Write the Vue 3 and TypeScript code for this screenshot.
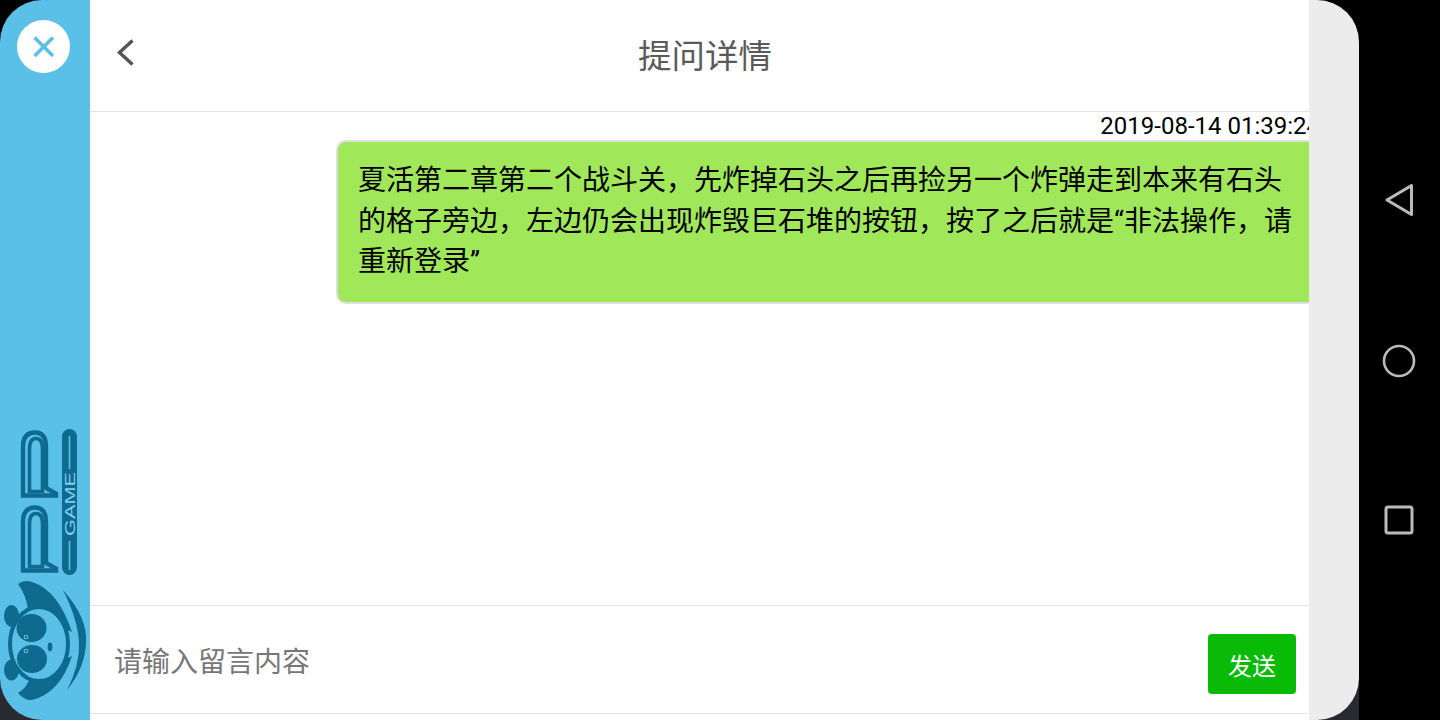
<script setup lang="ts">
import { ref } from 'vue'

const message = ref('')
const sentAt = '2019-08-14 01:39:24'
const question = '夏活第二章第二个战斗关，先炸掉石头之后再捡另一个炸弹走到本来有石头的格子旁边，左边仍会出现炸毁巨石堆的按钮，按了之后就是“非法操作，请重新登录”'
</script>

<template>
  <div class="device">
    <div class="screen">
      <aside class="side">
        <button class="close" aria-label="关闭">
          <svg width="53" height="53" viewBox="0 0 53 53">
            <path d="M17.5 17.5 L36 36 M36 17.5 L17.5 36" fill="none" stroke="#5bc0e8" stroke-width="3.6" />
          </svg>
        </button>
        <svg class="logo" width="90" height="300" viewBox="0 420 90 300">
          <g v-for="offset in [0, 75]" :key="offset" :transform="`translate(0 ${offset})`" fill="none" stroke="#0e6a8f">
            <path stroke-width="4.4" d="M23 497 V447 Q23 432.5 35 432.5 Q46 432.5 46 447 V488 L56 493.5 V495.5 H21" />
            <path stroke-width="3.6" d="M29.5 491.5 V449 Q29.5 438.5 36 438.5 Q42.5 438.5 42.5 449 V491.5 Z" />
          </g>
          <rect x="62" y="429" width="15" height="146" rx="7.5" fill="#0e6a8f" />
          <path d="M69.5 436 V469 M69.5 541 V570" stroke="#5bc0e8" stroke-width="1.6" />
          <text x="0" y="0" transform="translate(75 536) rotate(-90)" class="game" textLength="64" lengthAdjust="spacingAndGlyphs">GAME</text>

          <path d="M63 590 Q88 618 86 643 Q85 668 67 690 Q80 665 79 643 Q78 620 63 590 Z" fill="#0e6a8f" />
          <path d="M18 584 Q24 579 32 582 Q58 590 72 632 L40 618 L28 609 Q26 595 18 584 Z" fill="#0e6a8f" />
          <path d="M18 693 Q25 701 32 700 Q60 693 72 656 L40 670 L28 682 Q26 688 18 693 Z" fill="#0e6a8f" />
          <ellipse cx="11.5" cy="616" rx="7.5" ry="11" fill="#0e6a8f" />
          <ellipse cx="11.5" cy="670" rx="7.5" ry="10.5" fill="#0e6a8f" />
          <ellipse cx="39" cy="644" rx="29" ry="37" fill="#5bc0e8" stroke="#0e6a8f" stroke-width="4" />
          <ellipse cx="31.5" cy="628" rx="15" ry="14" fill="#0e6a8f" />
          <ellipse cx="32" cy="659" rx="15" ry="14" fill="#0e6a8f" />
          <circle cx="26" cy="637" r="1.8" fill="#0e6a8f" stroke="#6fb9d6" stroke-width="1.1" />
          <circle cx="26" cy="651" r="1.8" fill="#0e6a8f" stroke="#6fb9d6" stroke-width="1.1" />
          <ellipse cx="50" cy="647" rx="2.4" ry="4.4" fill="#0e6a8f" />
        </svg>
      </aside>

      <main class="main">
        <header class="header">
          <button class="back" aria-label="返回">
            <svg width="20" height="28" viewBox="0 0 20 28">
              <path d="M15.5 1.5 L2.5 13.5 L15.5 25.5" fill="none" stroke="#555" stroke-width="3.4" />
            </svg>
          </button>
          <h1 class="title">提问详情</h1>
        </header>

        <section class="thread">
          <div class="msg">
            <div class="time">{{ sentAt }}</div>
            <div class="bubble">{{ question }}</div>
          </div>
        </section>

        <footer class="composer">
          <input v-model="message" class="input" placeholder="请输入留言内容" />
          <button class="send">发送</button>
        </footer>
      </main>

      <div class="gutter"></div>
    </div>

    <nav class="nav">
      <svg width="32" height="36" viewBox="0 0 32 36">
        <path d="M28.5 3.5 V32.5 L4 18 Z" fill="none" stroke="#bbb" stroke-width="3" stroke-linejoin="round" />
      </svg>
      <svg width="34" height="34" viewBox="0 0 34 34">
        <circle cx="17" cy="17" r="15" fill="none" stroke="#bbb" stroke-width="2.6" />
      </svg>
      <svg width="32" height="32" viewBox="0 0 32 32">
        <rect x="3" y="3" width="26" height="26" rx="2" fill="none" stroke="#bbb" stroke-width="3" />
      </svg>
    </nav>
  </div>
</template>

<style>
html,
body {
  margin: 0;
  background: #000;
}
</style>

<style scoped>
.device {
  display: flex;
  width: 1440px;
  height: 720px;
  overflow: hidden;
  font-family: Roboto, "Noto Sans CJK SC", sans-serif;
  background: linear-gradient(#000 50%, #282a30 50%) 0 0 / 1359px 720px no-repeat #000;
}

.screen {
  display: flex;
  width: 1359px;
  height: 720px;
  overflow: hidden;
  border-radius: 42px;
}

.side {
  display: flex;
  flex-direction: column;
  flex: none;
  width: 90px;
  background: #5bc0e8;
}

.close {
  display: block;
  width: 53px;
  height: 53px;
  margin: 20px 0 0 17px;
  padding: 0;
  border: none;
  border-radius: 50%;
  background: #fff;
}

.close svg,
.back svg {
  display: block;
}

.logo {
  display: block;
  margin-top: auto;
}

.game {
  font-family: "Liberation Sans", sans-serif;
  font-size: 15px;
  fill: #7fd0ee;
}

.main {
  display: flex;
  flex-direction: column;
  flex: none;
  width: 1219px;
  overflow: hidden;
  background: #fff;
}

.header {
  display: flex;
  align-items: center;
  flex: none;
  height: 111px;
  border-bottom: 1px solid #e3e3e3;
}

.back {
  flex: none;
  width: 20px;
  height: 28px;
  margin: 0 0 6px 27px;
  padding: 0;
  border: none;
  background: none;
}

.title {
  flex: 1;
  margin: 0 0 4px;
  padding-right: 36px;
  color: #5a5a5a;
  font-size: 33.5px;
  font-weight: 400;
  text-align: center;
}

.thread {
  flex: 1;
}

.msg {
  width: 981px;
  margin-left: 246px;
}

.time {
  height: 28px;
  margin-right: -3px;
  color: #000;
  font-size: 24px;
  line-height: 28px;
  text-align: right;
  white-space: nowrap;
}

.bubble {
  padding: 19px 20px;
  border: 2px solid #dedede;
  border-radius: 10px;
  color: #000;
  font-size: 28px;
  line-height: 40.6px;
  background: #a0e75a;
}

.composer {
  display: flex;
  align-items: flex-end;
  flex: none;
  height: 88px;
  margin-bottom: 6px;
  padding-bottom: 19px;
  border-top: 1px solid #e3e3e3;
  border-bottom: 1px solid #e3e3e3;
}

.input {
  flex: 1;
  height: 60px;
  margin: 0 0 2px 24px;
  padding: 0;
  border: none;
  outline: none;
  color: #333;
  font-family: inherit;
  font-size: 28px;
}

.input::placeholder {
  color: #777;
}

.send {
  flex: none;
  width: 88px;
  height: 60px;
  margin: 0 13px 0 10px;
  padding: 0;
  border: none;
  border-radius: 4px;
  color: #fff;
  font-family: inherit;
  font-size: 24px;
  background: #09bb07;
}

.gutter {
  flex: 1;
  background: #ececec;
}

.nav {
  display: flex;
  flex-direction: column;
  align-items: center;
  justify-content: space-between;
  flex: none;
  box-sizing: border-box;
  width: 81px;
  height: 720px;
  padding: 182px 2px 184px 0;
  background: #000;
}
</style>
